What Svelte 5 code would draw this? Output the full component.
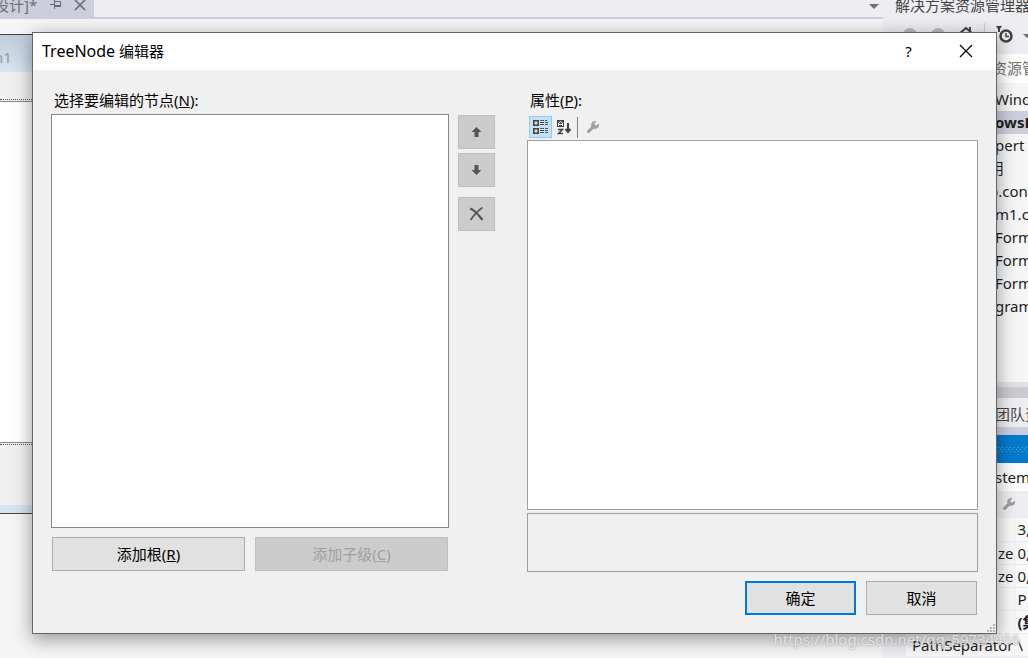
<script lang="ts">
  interface TreeItem {
    text: string;
    selected?: boolean;
    outdent?: boolean;
  }

  const treeItems: TreeItem[] = [
    { text: "Wind" },
    { text: "owsF", selected: true },
    { text: "pert" },
    { text: "用", outdent: true },
    { text: "p.con", outdent: true },
    { text: "m1.c" },
    { text: "Form" },
    { text: "Form" },
    { text: "Form" },
    { text: "gram" },
  ];

  const properties = [
    { name: "", value: "3," },
    { name: "ze", value: "0," },
    { name: "ze", value: "0," },
    { name: "", value: "P" },
    { name: "", value: "(集", bold: true },
    { name: "PathSeparator", value: "\\" },
  ];
</script>

{#snippet wrench()}
  <svg width="14" height="14" viewBox="0 0 14 14" aria-hidden="true">
    <path d="M2.6 11.4L8 6.2" stroke="#a0a0a0" stroke-width="3.2" stroke-linecap="round" />
    <path d="M10.6 1.2L8.4 3.6L8.6 5.4L10.4 5.6L12.8 3.4A4 4 0 1 1 10.6 1.2Z" fill="#a0a0a0" />
  </svg>
{/snippet}

<div class="ide">
  <section class="editor">
    <div class="tabs">
      <div class="tab">
        <span>设计]*</span>
        <svg width="12" height="12" viewBox="0 0 12 12" fill="none" stroke="#6b6b74" aria-hidden="true">
          <path d="M0 4.5h4M4.5 0v9M5 1.5h5.500v5H5" />
          <path d="M5 6h6" stroke-width="2" />
        </svg>
        <svg width="12" height="12" viewBox="0 0 12 12" stroke="#6b6b74" stroke-width="1.6" aria-hidden="true">
          <path d="M1 0l10 10M11 0L1 10" />
        </svg>
      </div>
      <svg class="tab-menu" width="10" height="5" aria-hidden="true">
        <path d="M0 0h10L5 5z" fill="#717171" />
      </svg>
    </div>
    <div class="form">
      <div class="form-title">n1</div>
      <div class="form-gap"></div>
      <div class="form-canvas"></div>
      <div class="form-foot"></div>
    </div>
  </section>

  <aside class="side">
    <div class="side-title">解决方案资源管理器</div>
    <div class="side-tools">
      <svg width="134" height="32" viewBox="0 0 134 32" aria-hidden="true">
        <circle cx="16" cy="13" r="7" fill="#b8b8bc" />
        <circle cx="44" cy="13" r="7" fill="#b8b8bc" />
        <path d="M65 12l7-6 7 6M76 5v4" fill="none" stroke="#424242" stroke-width="2" />
        <path d="M90.500 1v20" stroke="#cccedb" />
        <path d="M102 4h6l-2 3v3h-2v-3z" fill="#424242" />
        <circle cx="112" cy="14" r="5.500" fill="none" stroke="#424242" stroke-width="2.500" />
        <path d="M112 11v3.500h3" fill="none" stroke="#424242" stroke-width="1.500" />
        <path d="M129 12h8l-4 4z" fill="#717171" />
      </svg>
    </div>
    <div class="side-search">资源管</div>
    <ul class="tree">
      {#each treeItems as item}
        <li class:selected={item.selected} class:outdent={item.outdent}>{item.text}</li>
      {/each}
    </ul>
    <div class="scrollbar"></div>
    <div class="side-tab">团队资</div>
    <div class="props-title"></div>
    <div class="props-object">stem</div>
    <div class="props-tools">{@render wrench()}</div>
    <table class="props">
      <tbody>
        {#each properties as prop}
          <tr class:bold={prop.bold}>
            <th scope="row">{prop.name}</th>
            <td>{prop.value}</td>
          </tr>
        {/each}
      </tbody>
    </table>
  </aside>

  <div class="dialog" role="dialog" aria-labelledby="dialog-title">
    <header>
      <h1 id="dialog-title"><span>TreeNode</span> 编辑器</h1>
      <button class="caption" aria-label="帮助">?</button>
      <button class="caption" aria-label="关闭">
        <svg width="14" height="14" viewBox="0 0 14 14" stroke="#000" stroke-width="1.2">
          <path d="M1 1l12 12M13 1L1 13" />
        </svg>
      </button>
    </header>

    <div class="content">
      <div class="nodes">
        <div class="label" id="nodes-label">选择要编辑的节点(<u>N</u>):</div>
        <div class="node-tree" role="tree" aria-labelledby="nodes-label" tabindex="0"></div>
        <div class="add-buttons">
          <button class="push">添加根(<u>R</u>)</button>
          <button class="push" disabled>添加子级(<u>C</u>)</button>
        </div>
      </div>

      <div class="move-buttons">
        <button disabled aria-label="上移">
          <svg width="12" height="12" viewBox="0 0 12 12" fill="#555">
            <path d="M5.500 1l5 5H7.500v5h-4V6H.5z" />
          </svg>
        </button>
        <button disabled aria-label="下移">
          <svg width="12" height="12" viewBox="0 0 12 12" fill="#555">
            <path d="M5.500 11l5-5H7.500V1h-4v5H.5z" />
          </svg>
        </button>
        <button class="delete" disabled aria-label="删除">
          <svg width="16" height="16" viewBox="0 0 16 16" fill="none" stroke="#555">
            <path d="M1 2.500Q6 4 13.500 14" stroke-width="2.200" />
            <path d="M13.500 1.500Q7 6 1.500 14" stroke-width="1.600" />
          </svg>
        </button>
      </div>

      <div class="details">
        <div class="label" id="props-label">属性(<u>P</u>):</div>
        <div class="toolbar">
          <button class="pressed" aria-label="按分类顺序">
            <svg width="16" height="16" viewBox="0 0 16 16">
              <path d="M0 1h6v6H0zM0 9h6v6H0z" fill="#424242" />
              <path d="M1 4h4M3 2v4M1 12h4M3 10v4" stroke="#fff" />
              <path
                d="M7 1.500h4M7 3.500h4M7 5.500h4M7 9.500h4M7 11.500h4M7 13.500h4M12 1.500h2M12 3.500h3M12 5.500h3M12 9.500h3M12 11.500h3M12 13.500h3"
                stroke="#555"
              />
            </svg>
          </button>
          <button aria-label="字母顺序">
            <svg width="16" height="16" viewBox="0 0 16 16">
              <path d="M0 1h7v7H0z" fill="#424242" />
              <path d="M1.500 7V4L3.500 2.500L5.500 4V7M2 5.500h3" fill="none" stroke="#fff" />
              <path d="M1 10.500h4.500L1.500 14.500H6" fill="none" stroke="#424242" stroke-width="1.500" />
              <path d="M11 4v9M8.500 10l2.500 3 2.500-3" fill="none" stroke="#424242" stroke-width="2" />
            </svg>
          </button>
          <span class="divider"></span>
          <button disabled aria-label="属性页">{@render wrench()}</button>
        </div>
        <div class="grid" role="grid" aria-labelledby="props-label" tabindex="0"></div>
        <div class="help"></div>
      </div>
    </div>

    <footer>
      <button class="push ok">确定</button>
      <button class="push">取消</button>
      <svg class="grip" width="9" height="9" viewBox="0 0 9 9" fill="#b5b5b5" aria-hidden="true">
        <path d="M6 0h2v2H6zM3 3h2v2H3zM6 3h2v2H6zM0 6h2v2H0zM3 6h2v2H3zM6 6h2v2H6z" />
      </svg>
    </footer>
  </div>

  <div class="watermark">https://blog.csdn.net/qq_59734466</div>
</div>

<style>
  :global(body) {
    margin: 0;
  }

  .ide {
    position: relative;
    display: grid;
    grid-template-columns: minmax(0, 1fr) 142px;
    gap: 3px;
    min-height: 100vh;
    max-height: 100vh;
    overflow: hidden;
    background: #eeeef2;
    color: #1e1e1e;
    font: 15px/20px "Noto Sans", "Noto Sans CJK SC", sans-serif;
  }

  button {
    box-sizing: border-box;
    padding: 0;
    border: 0;
    background: none;
    color: #000;
    font: inherit;
  }

  svg {
    display: block;
  }

  /* designer behind the dialog */
  .editor {
    background: #f5f5f5;
  }

  .tabs {
    display: flex;
    justify-content: space-between;
    align-items: flex-start;
    height: 17px;
    border-bottom: 2px solid #cccedb;
    background: #eeeef2;
  }

  .tab {
    display: flex;
    gap: 12px;
    box-sizing: border-box;
    width: 94px;
    height: 17px;
    background: #cccedb;
    color: #717171;
    line-height: 10px;
  }

  .tab span {
    width: 38px;
    text-indent: -6px;
    white-space: nowrap;
  }

  .tab-menu {
    margin: 4px 4px 0 0;
  }

  .form {
    width: 50%;
    margin-top: 15px;
    border-top: 1px solid #444;
    border-bottom: 1px solid #444;
    background: #f0f0f0;
  }

  .form-title {
    height: 29px;
    padding-top: 8px;
    background: linear-gradient(#bfcddb, #d7e4f2);
    color: #999;
    line-height: 28px;
    text-indent: -6px;
  }

  .form-gap {
    height: 27px;
    border-bottom: 1px dotted #555;
  }

  .form-canvas {
    height: 340px;
    margin-top: 1px;
    border-top: 1px solid #828790;
    border-bottom: 1px solid #828790;
    background: #fff;
  }

  .form-foot {
    height: 60px;
    margin-top: 1px;
    border-top: 1px dotted #555;
    border-bottom: 8px solid #d7e4f2;
  }

  /* solution explorer and properties */
  .side {
    min-width: 0;
    overflow: hidden;
    white-space: nowrap;
  }

  .side-title {
    height: 22px;
    padding-left: 9px;
    color: #444;
    line-height: 10px;
  }

  .side-tools {
    height: 32px;
    padding-left: 8px;
  }

  .side-search {
    height: 29px;
    padding-left: 106px;
    background: #fff;
    color: #717171;
    line-height: 28px;
  }

  .tree {
    box-sizing: border-box;
    height: 299px;
    margin: 0;
    padding: 5px 0 0;
    background: #f6f6f6;
    list-style: none;
  }

  .tree li {
    height: 23px;
    padding-left: 109px;
    line-height: 23px;
  }

  .tree .selected {
    background: #cccedb;
    font-weight: bold;
  }

  .tree .outdent {
    padding-left: 103px;
  }

  .scrollbar {
    height: 11px;
    border-top: 5px solid #e0e0e6;
    border-bottom: 5px solid #eeeef2;
    background: #cacad0;
  }

  .side-tab {
    height: 24px;
    padding-left: 109px;
    border-bottom: 8px solid #cccedb;
    color: #444;
    line-height: 22px;
  }

  .props-title {
    display: flex;
    align-items: center;
    height: 28px;
    background: #007acc;
  }

  /* dotted grip of the tool window */
  .props-title::after {
    content: "";
    flex: 1;
    height: 5px;
    background:
      linear-gradient(#59a8de, #59a8de) 0 0 / 1px 1px no-repeat,
      conic-gradient(from 270deg at 1px 1px, #59a8de 90deg, transparent 0) 0 0 / 4px 4px,
      conic-gradient(from 270deg at 1px 1px, #59a8de 90deg, transparent 0) 2px 2px / 4px 4px;
  }

  .props-object {
    height: 28px;
    padding-left: 109px;
    background: #fcfcfc;
    line-height: 28px;
  }

  .props-tools {
    height: 21px;
    padding: 6px 0 0 116px;
  }

  .props {
    width: 100%;
    border-collapse: collapse;
    border-left: 20px solid #eeeef2;
    table-layout: fixed;
  }

  .props th,
  .props td {
    box-sizing: border-box;
    height: 23px;
    padding: 0;
    border-bottom: 1px solid #eeeef2;
    background: #f8f8f8;
    font-weight: normal;
    line-height: 22px;
    text-align: right;
  }

  .props td {
    width: 14px;
    padding-left: 3px;
    border-left: 1px solid #eeeef2;
    text-align: left;
  }

  .props .bold td {
    font-weight: bold;
  }

  /* dialog */
  .dialog {
    position: absolute;
    top: 32px;
    right: 31px;
    left: 32px;
    border: 1px solid #646464;
    background: #f0f0f0;
    box-shadow: 0 5px 18px rgba(0, 0, 0, 0.4);
    color: #000;
  }

  header {
    display: flex;
    height: 37px;
    padding: 0 2px 0 9px;
    background: #fff;
    line-height: 36px;
  }

  h1 {
    flex: 1;
    margin: 0;
    font-size: 15px;
    font-weight: normal;
  }

  h1 span {
    font-size: 16px;
  }

  .caption {
    display: grid;
    place-items: center;
    width: 57px;
    height: 36px;
  }

  .content {
    display: grid;
    grid-template-columns: 398fr 37px 474fr;
    column-gap: 9px;
    margin: 0 18px;
  }

  .label {
    padding: 20px 3px 4px;
  }

  .node-tree {
    box-sizing: border-box;
    height: 414px;
    border: 1px solid #828790;
    background: #fff;
  }

  .add-buttons {
    display: grid;
    grid-template-columns: 1fr 1fr;
    gap: 10px;
    padding: 9px 1px 0;
  }

  .push {
    height: 34px;
    border: 1px solid #adadad;
    background: #e1e1e1;
  }

  .push:disabled {
    border-color: #bfbfbf;
    background: #ccc;
    color: #a0a0a0;
  }

  .move-buttons {
    display: flex;
    flex-direction: column;
    gap: 4px;
    padding-top: 45px;
  }

  .move-buttons button {
    display: grid;
    place-items: center;
    height: 34px;
    border: 1px solid #bfbfbf;
    background: #ccc;
  }

  .move-buttons .delete {
    margin-top: 6px;
  }

  .details {
    margin-left: 23px;
  }

  .toolbar {
    display: flex;
    align-items: center;
    gap: 1px;
    height: 26px;
    padding-left: 2px;
  }

  .toolbar button {
    display: grid;
    place-items: center;
    box-sizing: border-box;
    width: 23px;
    height: 22px;
  }

  .toolbar .pressed {
    border: 1px solid #90c8f6;
    background: #c4e1f8;
  }

  .divider {
    width: 1px;
    height: 21px;
    margin-right: 2px;
    background: #808080;
  }

  .grid {
    box-sizing: border-box;
    height: 370px;
    border: 1px solid #a0a0a0;
    background: #fff;
  }

  .help {
    box-sizing: border-box;
    height: 59px;
    margin-top: 3px;
    border: 1px solid #a0a0a0;
  }

  footer {
    position: relative;
    display: flex;
    justify-content: flex-end;
    gap: 10px;
    padding: 9px 19px 18px;
  }

  footer .push {
    width: 111px;
  }

  footer .ok {
    border: 2px solid #0078d7;
  }

  .grip {
    position: absolute;
    right: 0;
    bottom: 0;
  }

  .watermark {
    position: absolute;
    right: 8px;
    bottom: 9px;
    color: rgba(255, 255, 255, 0.7);
    text-shadow: 0 0 2px #888;
  }
</style>
